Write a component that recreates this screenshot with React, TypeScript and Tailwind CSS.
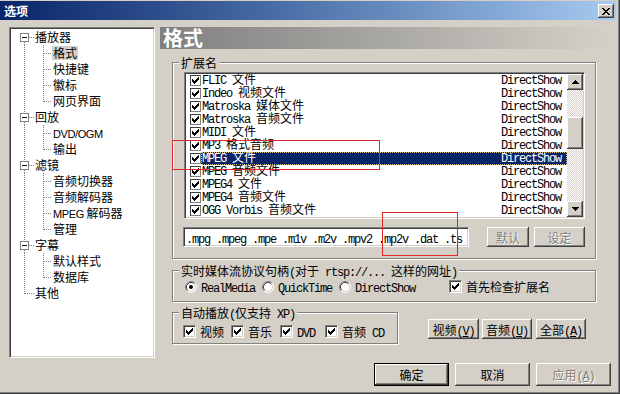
import React from "react";

const MONO = "font-['Liberation_Mono',monospace] text-[12px] tracking-[-1.2px] leading-[0] whitespace-pre";
const SANS = "font-['Liberation_Sans',sans-serif] text-[11px] tracking-[-0.4px] whitespace-pre";

function T({ s, sans }: { s: string; sans?: boolean }) {
  const parts = s.split(/([\x20-\x7e]+)/).filter((p) => p.length > 0);
  return (
    <>
      {parts.map((p, i) =>
        /^[\x20-\x7e]+$/.test(p) ? (
          <span key={i} className={sans ? SANS : MONO}>
            {p}
          </span>
        ) : (
          <span key={i}>{p}</span>
        )
      )}
    </>
  );
}

const CHECK = ["......#", ".....##", "#...###", "##.###.", "#####..", ".###...", "..#...."];

function CheckMark({ color = "#000" }: { color?: string }) {
  const rects: React.ReactNode[] = [];
  CHECK.forEach((row, y) =>
    row.split("").forEach((c, x) => {
      if (c === "#") rects.push(<rect key={`${x}-${y}`} x={x} y={y} width={1} height={1} fill={color} />);
    })
  );
  return (
    <svg width="7" height="7" viewBox="0 0 7 7" shapeRendering="crispEdges">
      {rects}
    </svg>
  );
}

function CheckBox() {
  return (
    <div className="w-[13px] h-[13px] shrink-0 bg-white border border-t-[#808080] border-l-[#808080] border-r-white border-b-white shadow-[inset_1px_1px_#404040,inset_-1px_-1px_#d4d0c8] flex items-center justify-center">
      <CheckMark />
    </div>
  );
}

function ListCheck() {
  return (
    <div className="w-[11px] h-[11px] shrink-0 bg-white border border-t-[#404040] border-l-[#404040] border-r-[#808080] border-b-[#808080] flex items-center justify-center">
      <CheckMark />
    </div>
  );
}

function Radio({ on }: { on?: boolean }) {
  return (
    <svg width="12" height="12" viewBox="0 0 12 12" className="shrink-0 block">
      <circle cx="6" cy="6" r="5" fill="#fff" />
      <path d="M2.11 9.89 A5.5 5.5 0 0 1 9.89 2.11" stroke="#808080" fill="none" />
      <path d="M9.89 2.11 A5.5 5.5 0 0 1 2.11 9.89" stroke="#fff" fill="none" />
      <path d="M2.82 9.18 A4.5 4.5 0 0 1 9.18 2.82" stroke="#404040" fill="none" />
      <path d="M9.18 2.82 A4.5 4.5 0 0 1 2.82 9.18" stroke="#d4d0c8" fill="none" />
      {on && <circle cx="6" cy="6" r="2" fill="#000" />}
    </svg>
  );
}

const RAISED =
  "bg-[#D4D0C8] shadow-[inset_-1px_-1px_#404040,inset_1px_1px_#fff,inset_-2px_-2px_#808080,inset_2px_2px_#d4d0c8]";
const DIS = "text-[#808080] [text-shadow:1px_1px_#fff]";

function Arrow({ down }: { down?: boolean }) {
  return (
    <svg width="7" height="4" viewBox="0 0 7 4" shapeRendering="crispEdges">
      {down ? (
        <path d="M0 0h7v1h-1v1h-1v1h-1v1h-1v-1h-1v-1h-1v-1h-1z" fill="#000" />
      ) : (
        <path d="M3 0h1v1h1v1h1v1h1v1h-7v-1h1v-1h1v-1h1z" fill="#000" />
      )}
    </svg>
  );
}

type Node = { l: number; t: string; box?: boolean; first?: boolean; last?: boolean; lastChild?: boolean; sel?: boolean };

const TREE: Node[] = [
  { l: 0, t: "播放器", box: true, first: true },
  { l: 1, t: "格式", sel: true },
  { l: 1, t: "快捷键" },
  { l: 1, t: "徽标" },
  { l: 1, t: "网页界面", lastChild: true },
  { l: 0, t: "回放", box: true },
  { l: 1, t: "DVD/OGM" },
  { l: 1, t: "输出", lastChild: true },
  { l: 0, t: "滤镜", box: true },
  { l: 1, t: "音频切换器" },
  { l: 1, t: "音频解码器" },
  { l: 1, t: "MPEG 解码器" },
  { l: 1, t: "管理", lastChild: true },
  { l: 0, t: "字幕", box: true },
  { l: 1, t: "默认样式" },
  { l: 1, t: "数据库", lastChild: true },
  { l: 0, t: "其他", last: true },
];

const DOT = { stroke: "#808080", strokeDasharray: "1 1", shapeRendering: "crispEdges" as const };

function TreeLines({ n }: { n: Node }) {
  if (n.l === 0) {
    return (
      <svg width="23" height="16" className="shrink-0">
        {n.box ? (
          <>
            {!n.first && <line x1="13.5" y1="0" x2="13.5" y2="4" {...DOT} />}
            <line x1="13.5" y1="13" x2="13.5" y2="16" {...DOT} />
            <rect x="9.5" y="4.5" width="8" height="8" fill="#fff" stroke="#808080" shapeRendering="crispEdges" />
            <line x1="11" y1="8.5" x2="16" y2="8.5" stroke="#000" shapeRendering="crispEdges" />
            <line x1="18" y1="8.5" x2="23" y2="8.5" {...DOT} />
          </>
        ) : (
          <>
            <line x1="13.5" y1="0" x2="13.5" y2={n.last ? 9 : 16} {...DOT} />
            <line x1="14" y1="8.5" x2="23" y2="8.5" {...DOT} />
          </>
        )}
      </svg>
    );
  }
  return (
    <svg width="41" height="16" className="shrink-0">
      <line x1="13.5" y1="0" x2="13.5" y2="16" {...DOT} />
      <line x1="32.5" y1="0" x2="32.5" y2={n.lastChild ? 9 : 16} {...DOT} />
      <line x1="33" y1="8.5" x2="41" y2="8.5" {...DOT} />
    </svg>
  );
}

function Tree() {
  return (
    <div className="w-[146px] h-[331px] shrink-0 bg-white border border-t-[#808080] border-l-[#808080] border-r-white border-b-white shadow-[inset_1px_1px_#404040,inset_-1px_-1px_#d4d0c8] pt-[1px] pl-[1px]">
      {TREE.map((n, i) => (
        <div key={i} className="flex h-[16px] items-center">
          <TreeLines n={n} />
          <span className={`block px-[1px] h-[14px] leading-[14px] whitespace-nowrap ${n.sel ? "bg-[#D4D0C8]" : ""}`}>
            <T s={n.t} sans />
          </span>
        </div>
      ))}
    </div>
  );
}

const ITEMS = [
  "FLIC 文件",
  "Indeo 视频文件",
  "Matroska 媒体文件",
  "Matroska 音频文件",
  "MIDI 文件",
  "MP3 格式音频",
  "MPEG 文件",
  "MPEG 音频文件",
  "MPEG4 文件",
  "MPEG4 音频文件",
  "OGG Vorbis 音频文件",
];

function List() {
  return (
    <div className="ml-[11px] w-[401px] h-[147px] bg-white border border-t-[#808080] border-l-[#808080] border-r-white border-b-white shadow-[inset_1px_1px_#404040,inset_-1px_-1px_#d4d0c8] p-[1px] flex">
      <div className="flex-1 overflow-hidden">
        {ITEMS.map((it, i) => (
          <div key={i} className="flex items-center h-[13px]">
            <div className="ml-[4px]">
              <ListCheck />
            </div>
            <div
              className={`flex-1 flex h-[13px] pl-[1px] ${
                i === 6 ? "bg-[#0A246A] text-white outline-1 outline-dotted outline-[#d8c070] -outline-offset-1" : ""
              }`}
            >
              <span className="block w-[299px] shrink-0 leading-[10px] whitespace-nowrap">
                <T s={it} />
              </span>
              <span className="block leading-[10px] whitespace-nowrap">
                <span className={MONO}>DirectShow</span>
              </span>
            </div>
          </div>
        ))}
      </div>
      <div className="w-[16px] flex flex-col">
        <div className={`h-[16px] ${RAISED} flex items-center justify-center`}>
          <Arrow />
        </div>
        <div className="flex-1 bg-[image:repeating-conic-gradient(#fff_0%_25%,#d4d0c8_0%_50%)] bg-[length:2px_2px]">
          <div className={`mt-[27px] h-[32px] ${RAISED}`} />
        </div>
        <div className={`h-[16px] ${RAISED} flex items-center justify-center`}>
          <Arrow down />
        </div>
      </div>
    </div>
  );
}

function Group({ label, className, children }: { label: React.ReactNode; className: string; children: React.ReactNode }) {
  return (
    <div className={`relative border border-[#808080] shadow-[inset_1px_1px_#fff,1px_1px_#fff] ${className}`}>
      <span className="absolute left-[6px] -top-[7px] px-[2px] bg-[#D4D0C8] leading-[13px] whitespace-nowrap">{label}</span>
      {children}
    </div>
  );
}

function Btn({ className, children }: { className: string; children: React.ReactNode }) {
  return (
    <div className={`${RAISED} flex items-center justify-center ${className}`}>
      <span className="leading-[13px] whitespace-nowrap">{children}</span>
    </div>
  );
}

function Lbl({ children, className = "" }: { children: React.ReactNode; className?: string }) {
  return <span className={`block leading-[13px] whitespace-nowrap ${className}`}>{children}</span>;
}

export default function App() {
  return (
    <div className="relative w-[620px] h-[394px] bg-[#D4D0C8] pt-[1px] pr-[4px] shadow-[inset_-1px_-1px_#404040,inset_-2px_-2px_#808080] text-[12px] leading-[13px] text-black overflow-hidden font-['Noto_Sans_CJK_SC',sans-serif]">
      <div className="h-[19px] bg-gradient-to-r from-[#0A246A] to-[#A6CAF0] flex items-center justify-between pl-[4px] pr-[2px]">
        <span className="text-white font-bold text-[12px] leading-[13px]">选项</span>
        <div className={`w-[16px] h-[14px] mt-[1px] ${RAISED} flex items-center justify-center`}>
          <svg width="8" height="7" viewBox="0 0 8 7" shapeRendering="crispEdges">
            <path
              d="M0 0h2v1h1v1h2v-1h1v-1h2v1h-1v1h-1v1h-1v1h1v1h1v1h1v1h-2v-1h-1v-1h-2v1h-1v1h-2v-1h1v-1h1v-1h1v-1h-1v-1h-1z"
              fill="#000"
            />
          </svg>
        </div>
      </div>

      <div className="flex mt-[7px] ml-[9px]">
        <Tree />
        <div className="ml-[5px] w-[448px] flex flex-col">
          <div className="h-[22px] bg-gradient-to-r from-[#808080] to-[#D4D0C8] pl-[3px] flex items-center">
            <span className="text-white text-[20px] leading-[22px] font-bold">格式</span>
          </div>

          <Group label={<T s="扩展名" />} className="mt-[13px] ml-[12px] w-[424px] pt-[9px] pb-[11px]">
            <List />
            <div className="flex mt-[8px] h-[20px]">
              <div className="ml-[10px] w-[286px] h-[20px] bg-white border border-t-[#808080] border-l-[#808080] border-r-white border-b-white shadow-[inset_1px_1px_#404040,inset_-1px_-1px_#d4d0c8] pl-[2px] flex items-center overflow-hidden">
                <span className="block leading-[13px] whitespace-nowrap">
                  <span className={MONO}>.mpg .mpeg .mpe .m1v .m2v .mpv2 .mp2v .dat .ts</span>
                </span>
              </div>
              <Btn className={`ml-[18px] w-[42px] h-[20px] ${DIS}`}>默认</Btn>
              <Btn className={`ml-[5px] w-[51px] h-[20px] ${DIS}`}>设定</Btn>
            </div>
          </Group>

          <Group
            label={<T s="实时媒体流协议句柄(对于 rtsp://... 这样的网址)" />}
            className="mt-[11px] ml-[12px] w-[424px] pt-[9px] pb-[8px]"
          >
            <div className="flex items-center h-[13px] pl-[12px]">
              <Radio on />
              <Lbl className="ml-[4px]">
                <T s="RealMedia" />
              </Lbl>
              <span className="ml-[7px]">
                <Radio />
              </span>
              <Lbl className="ml-[4px]">
                <T s="QuickTime" />
              </Lbl>
              <span className="ml-[7px]">
                <Radio />
              </span>
              <Lbl className="ml-[4px]">
                <T s="DirectShow" />
              </Lbl>
              <span className="ml-[34px]">
                <CheckBox />
              </span>
              <Lbl className="ml-[4px]">首先检查扩展名</Lbl>
            </div>
          </Group>

          <div className="flex items-start ml-[12px] mt-[10px]">
            <Group label={<T s="自动播放(仅支持 XP)" />} className="w-[226px] pt-[12px] pb-[5px]">
              <div className="flex items-center h-[13px] pl-[10px]">
                <CheckBox />
                <Lbl className="ml-[4px]">视频</Lbl>
                <span className="ml-[7px]">
                  <CheckBox />
                </span>
                <Lbl className="ml-[4px]">音乐</Lbl>
                <span className="ml-[8px]">
                  <CheckBox />
                </span>
                <Lbl className="ml-[4px]">
                  <T s="DVD" />
                </Lbl>
                <span className="ml-[10px]">
                  <CheckBox />
                </span>
                <Lbl className="ml-[4px]">
                  <T s="音频 CD" />
                </Lbl>
              </div>
            </Group>
            <Btn className="ml-[30px] mt-[7px] w-[51px] h-[20px]">
              视频<span className={MONO}>(</span>
              <span className={`${MONO} underline`}>V</span>
              <span className={MONO}>)</span>
            </Btn>
            <Btn className="ml-[3px] mt-[7px] w-[50px] h-[20px]">
              音频<span className={MONO}>(</span>
              <span className={`${MONO} underline`}>U</span>
              <span className={MONO}>)</span>
            </Btn>
            <Btn className="ml-[4px] mt-[7px] w-[50px] h-[20px]">
              全部<span className={MONO}>(</span>
              <span className={`${MONO} underline`}>A</span>
              <span className={MONO}>)</span>
            </Btn>
          </div>
        </div>
      </div>

      <div className="flex justify-end pr-[5px] gap-[6px] mt-[5px]">
        <div className="w-[75px] h-[23px] border border-black">
          <Btn className="w-full h-full">确定</Btn>
        </div>
        <Btn className="w-[75px] h-[23px]">取消</Btn>
        <Btn className={`w-[75px] h-[23px] ${DIS}`}>
          应用<span className={MONO}>(</span>
          <span className={`${MONO} underline`}>A</span>
          <span className={MONO}>)</span>
        </Btn>
      </div>

      <div className="absolute left-[172px] top-[140px] w-[208px] h-[30px] border border-[#E02828]" />
      <div className="absolute left-[382px] top-[212px] w-[76px] h-[44px] border border-[#E02828]" />
    </div>
  );
}
